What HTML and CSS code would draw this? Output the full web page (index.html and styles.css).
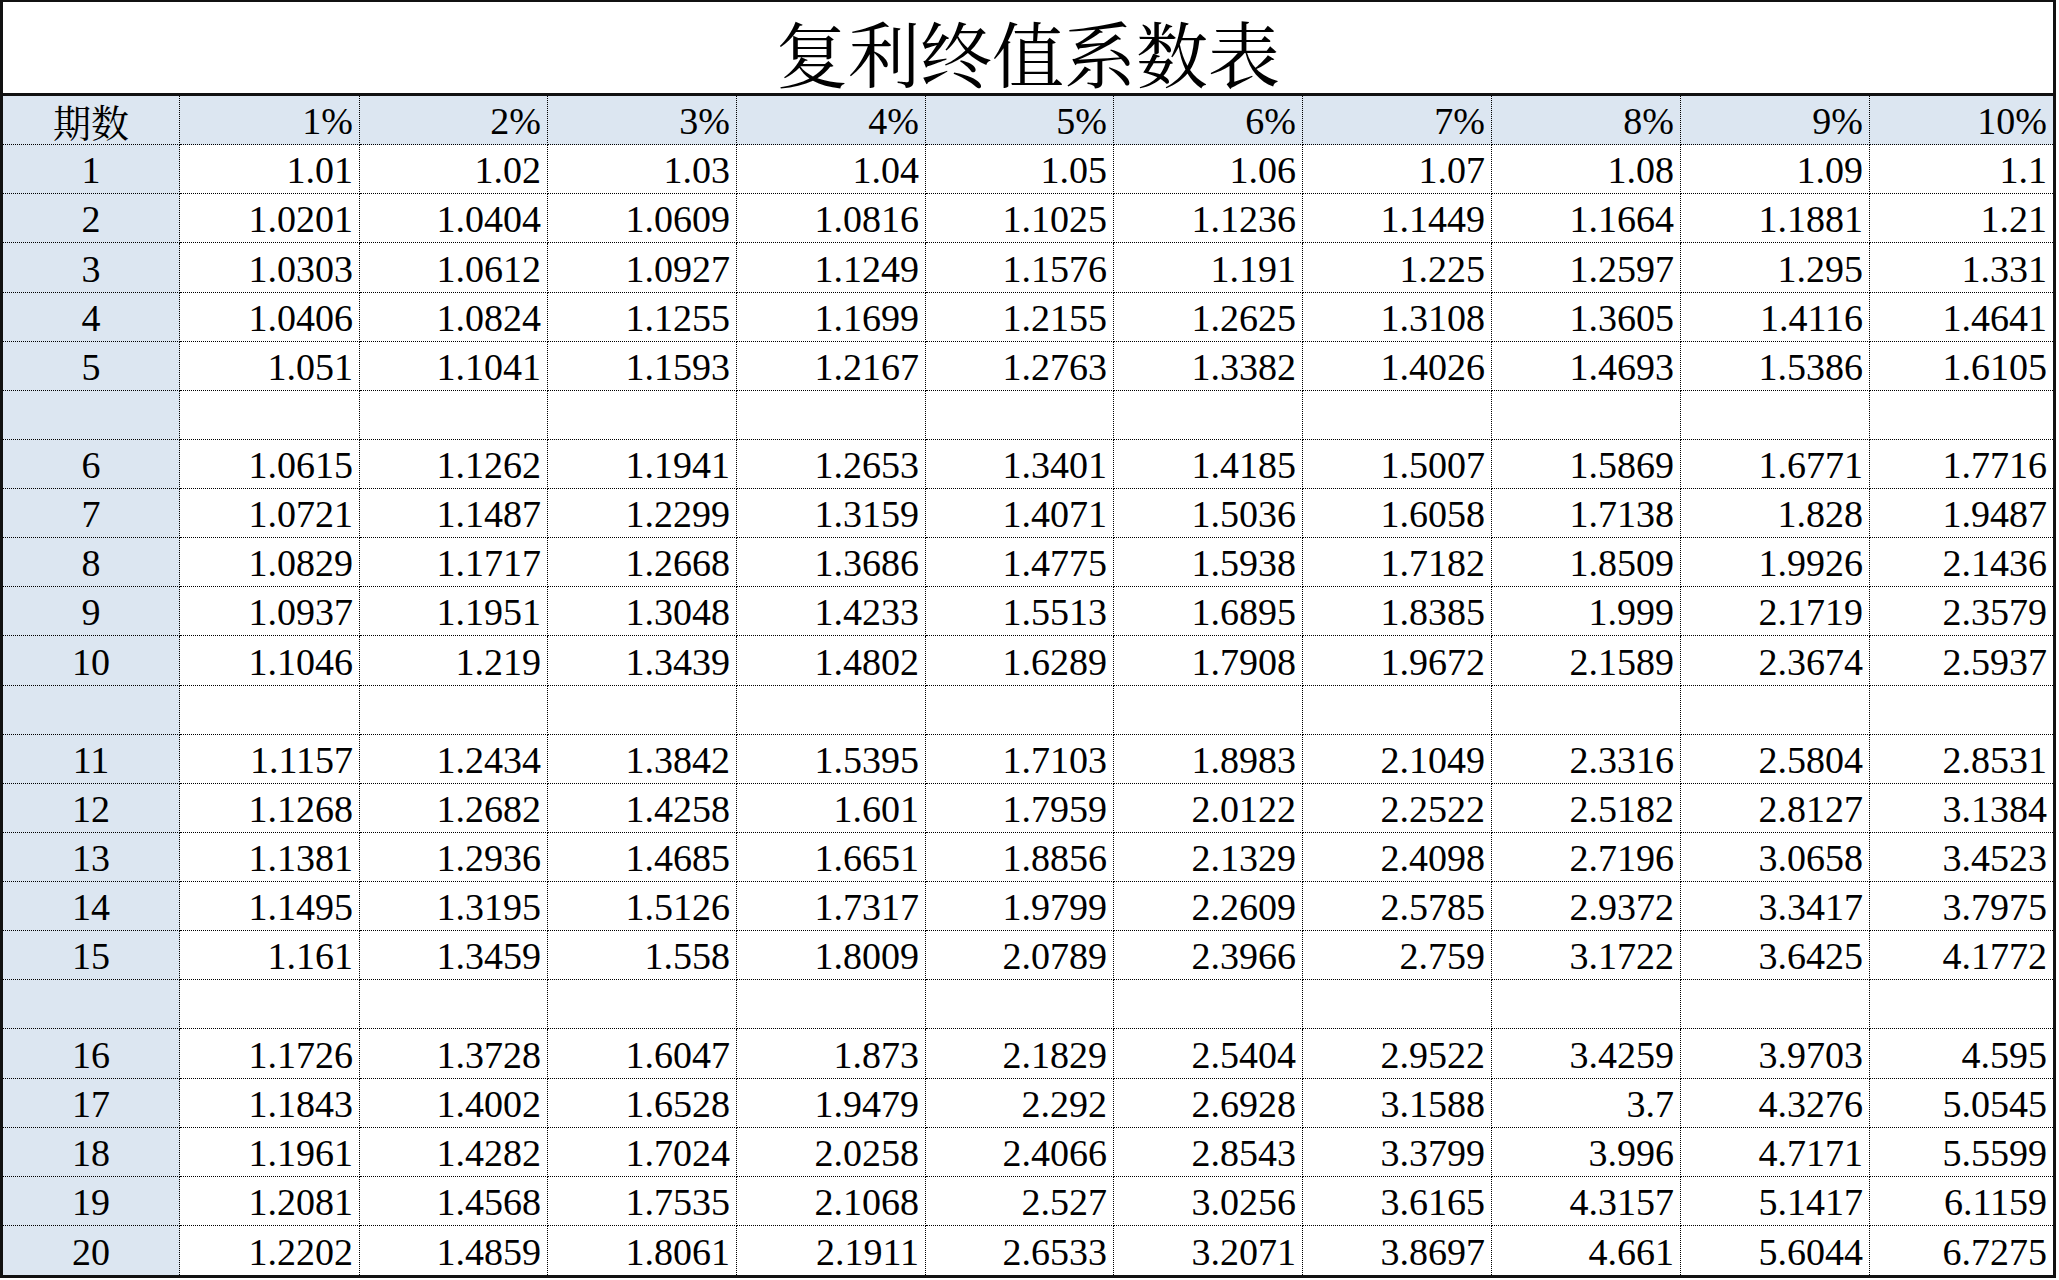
FILE: index.html
```html
<!DOCTYPE html>
<html lang="zh-CN">
<head>
<meta charset="utf-8">
<title>复利终值系数表</title>
<link rel="stylesheet" href="styles.css">
</head>
<body>
<div class="sheet">
  <div class="title">复利终值系数表</div>
  <div class="grid">
    <div class="c h k cjk">期数</div><div class="c h">1%</div><div class="c h">2%</div><div class="c h">3%</div><div class="c h">4%</div><div class="c h">5%</div><div class="c h">6%</div><div class="c h">7%</div><div class="c h">8%</div><div class="c h">9%</div><div class="c h">10%</div>
    <div class="c k">1</div><div class="c">1.01</div><div class="c">1.02</div><div class="c">1.03</div><div class="c">1.04</div><div class="c">1.05</div><div class="c">1.06</div><div class="c">1.07</div><div class="c">1.08</div><div class="c">1.09</div><div class="c">1.1</div>
    <div class="c k">2</div><div class="c">1.0201</div><div class="c">1.0404</div><div class="c">1.0609</div><div class="c">1.0816</div><div class="c">1.1025</div><div class="c">1.1236</div><div class="c">1.1449</div><div class="c">1.1664</div><div class="c">1.1881</div><div class="c">1.21</div>
    <div class="c k">3</div><div class="c">1.0303</div><div class="c">1.0612</div><div class="c">1.0927</div><div class="c">1.1249</div><div class="c">1.1576</div><div class="c">1.191</div><div class="c">1.225</div><div class="c">1.2597</div><div class="c">1.295</div><div class="c">1.331</div>
    <div class="c k">4</div><div class="c">1.0406</div><div class="c">1.0824</div><div class="c">1.1255</div><div class="c">1.1699</div><div class="c">1.2155</div><div class="c">1.2625</div><div class="c">1.3108</div><div class="c">1.3605</div><div class="c">1.4116</div><div class="c">1.4641</div>
    <div class="c k">5</div><div class="c">1.051</div><div class="c">1.1041</div><div class="c">1.1593</div><div class="c">1.2167</div><div class="c">1.2763</div><div class="c">1.3382</div><div class="c">1.4026</div><div class="c">1.4693</div><div class="c">1.5386</div><div class="c">1.6105</div>
    <div class="c k"></div><div class="c"></div><div class="c"></div><div class="c"></div><div class="c"></div><div class="c"></div><div class="c"></div><div class="c"></div><div class="c"></div><div class="c"></div><div class="c"></div>
    <div class="c k">6</div><div class="c">1.0615</div><div class="c">1.1262</div><div class="c">1.1941</div><div class="c">1.2653</div><div class="c">1.3401</div><div class="c">1.4185</div><div class="c">1.5007</div><div class="c">1.5869</div><div class="c">1.6771</div><div class="c">1.7716</div>
    <div class="c k">7</div><div class="c">1.0721</div><div class="c">1.1487</div><div class="c">1.2299</div><div class="c">1.3159</div><div class="c">1.4071</div><div class="c">1.5036</div><div class="c">1.6058</div><div class="c">1.7138</div><div class="c">1.828</div><div class="c">1.9487</div>
    <div class="c k">8</div><div class="c">1.0829</div><div class="c">1.1717</div><div class="c">1.2668</div><div class="c">1.3686</div><div class="c">1.4775</div><div class="c">1.5938</div><div class="c">1.7182</div><div class="c">1.8509</div><div class="c">1.9926</div><div class="c">2.1436</div>
    <div class="c k">9</div><div class="c">1.0937</div><div class="c">1.1951</div><div class="c">1.3048</div><div class="c">1.4233</div><div class="c">1.5513</div><div class="c">1.6895</div><div class="c">1.8385</div><div class="c">1.999</div><div class="c">2.1719</div><div class="c">2.3579</div>
    <div class="c k">10</div><div class="c">1.1046</div><div class="c">1.219</div><div class="c">1.3439</div><div class="c">1.4802</div><div class="c">1.6289</div><div class="c">1.7908</div><div class="c">1.9672</div><div class="c">2.1589</div><div class="c">2.3674</div><div class="c">2.5937</div>
    <div class="c k"></div><div class="c"></div><div class="c"></div><div class="c"></div><div class="c"></div><div class="c"></div><div class="c"></div><div class="c"></div><div class="c"></div><div class="c"></div><div class="c"></div>
    <div class="c k">11</div><div class="c">1.1157</div><div class="c">1.2434</div><div class="c">1.3842</div><div class="c">1.5395</div><div class="c">1.7103</div><div class="c">1.8983</div><div class="c">2.1049</div><div class="c">2.3316</div><div class="c">2.5804</div><div class="c">2.8531</div>
    <div class="c k">12</div><div class="c">1.1268</div><div class="c">1.2682</div><div class="c">1.4258</div><div class="c">1.601</div><div class="c">1.7959</div><div class="c">2.0122</div><div class="c">2.2522</div><div class="c">2.5182</div><div class="c">2.8127</div><div class="c">3.1384</div>
    <div class="c k">13</div><div class="c">1.1381</div><div class="c">1.2936</div><div class="c">1.4685</div><div class="c">1.6651</div><div class="c">1.8856</div><div class="c">2.1329</div><div class="c">2.4098</div><div class="c">2.7196</div><div class="c">3.0658</div><div class="c">3.4523</div>
    <div class="c k">14</div><div class="c">1.1495</div><div class="c">1.3195</div><div class="c">1.5126</div><div class="c">1.7317</div><div class="c">1.9799</div><div class="c">2.2609</div><div class="c">2.5785</div><div class="c">2.9372</div><div class="c">3.3417</div><div class="c">3.7975</div>
    <div class="c k">15</div><div class="c">1.161</div><div class="c">1.3459</div><div class="c">1.558</div><div class="c">1.8009</div><div class="c">2.0789</div><div class="c">2.3966</div><div class="c">2.759</div><div class="c">3.1722</div><div class="c">3.6425</div><div class="c">4.1772</div>
    <div class="c k"></div><div class="c"></div><div class="c"></div><div class="c"></div><div class="c"></div><div class="c"></div><div class="c"></div><div class="c"></div><div class="c"></div><div class="c"></div><div class="c"></div>
    <div class="c k">16</div><div class="c">1.1726</div><div class="c">1.3728</div><div class="c">1.6047</div><div class="c">1.873</div><div class="c">2.1829</div><div class="c">2.5404</div><div class="c">2.9522</div><div class="c">3.4259</div><div class="c">3.9703</div><div class="c">4.595</div>
    <div class="c k">17</div><div class="c">1.1843</div><div class="c">1.4002</div><div class="c">1.6528</div><div class="c">1.9479</div><div class="c">2.292</div><div class="c">2.6928</div><div class="c">3.1588</div><div class="c">3.7</div><div class="c">4.3276</div><div class="c">5.0545</div>
    <div class="c k">18</div><div class="c">1.1961</div><div class="c">1.4282</div><div class="c">1.7024</div><div class="c">2.0258</div><div class="c">2.4066</div><div class="c">2.8543</div><div class="c">3.3799</div><div class="c">3.996</div><div class="c">4.7171</div><div class="c">5.5599</div>
    <div class="c k">19</div><div class="c">1.2081</div><div class="c">1.4568</div><div class="c">1.7535</div><div class="c">2.1068</div><div class="c">2.527</div><div class="c">3.0256</div><div class="c">3.6165</div><div class="c">4.3157</div><div class="c">5.1417</div><div class="c">6.1159</div>
    <div class="c k">20</div><div class="c">1.2202</div><div class="c">1.4859</div><div class="c">1.8061</div><div class="c">2.1911</div><div class="c">2.6533</div><div class="c">3.2071</div><div class="c">3.8697</div><div class="c">4.661</div><div class="c">5.6044</div><div class="c">6.7275</div>
  </div>
</div>
</body>
</html>
```
FILE: styles.css
```css
html, body {
  margin: 0;
  padding: 0;
  background: #ffffff;
}

.sheet {
  box-sizing: border-box;
  width: 2056px;
  height: 1278px;
  border-top: 2px solid #111;
  border-left: 3px solid #111;
  border-right: 3px solid #111;
  border-bottom: 3px solid #111;
  display: flex;
  flex-direction: column;
  background: #fff;
}

.title {
  box-sizing: border-box;
  height: 94px;
  border-bottom: 3px solid #111;
  display: flex;
  align-items: center;
  justify-content: center;
  padding-top: 6px;
  font-family: "Noto Serif CJK SC", "Noto Sans CJK SC", serif;
  font-size: 72px;
  line-height: 1;
  color: #000;
}

.grid {
  flex: 1;
  display: grid;
  grid-template-columns: 177px 180px 188px 189px 189px 188px 189px 189px 189px 189px 1fr;
  grid-template-rows: repeat(24, 1fr);
  font-family: "Liberation Serif", "Times New Roman", Tinos, "DejaVu Serif", serif;
  font-size: 38px;
  line-height: 1.15;
  color: #000;
}

.c {
  box-sizing: border-box;
  border-right: 1px dotted #000;
  border-bottom: 1px dotted #000;
  display: flex;
  align-items: center;
  justify-content: flex-end;
  padding: 4px 6px 0 0;
  white-space: nowrap;
  min-height: 0;
}

.c:nth-child(11n) {
  border-right: none;
}

.c:nth-last-child(-n+11) {
  border-bottom: none;
}

.h {
  background: #dce6f1;
}

.k {
  background: #dce6f1;
  justify-content: center;
  padding-right: 0;
}

.cjk {
  font-family: "Noto Serif CJK SC", "Noto Sans CJK SC", serif;
  line-height: 1;
  padding-top: 2px;
}
```
